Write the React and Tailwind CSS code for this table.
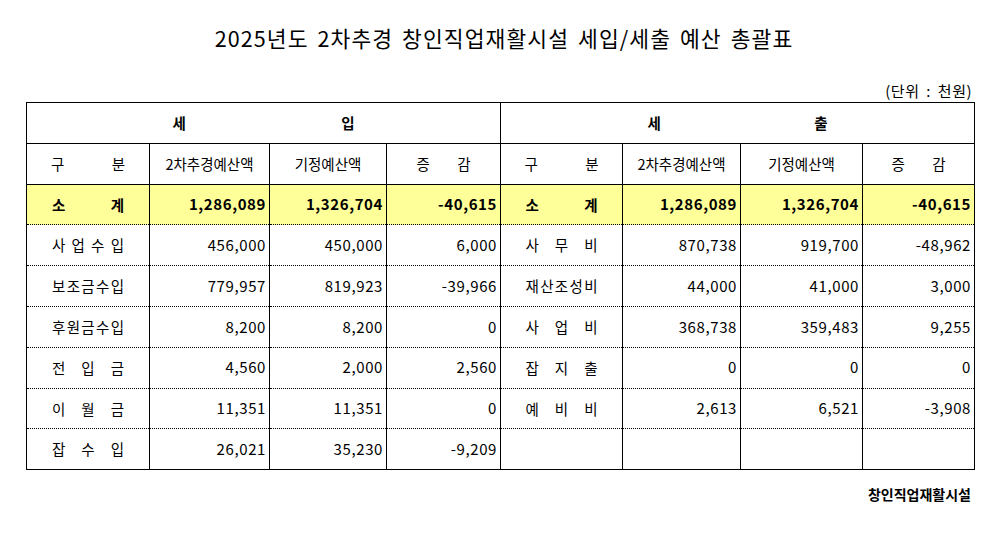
import React from 'react';

const income = [
  { label: ['사', '업', '수', '입'], a: '456,000', b: '450,000', c: '6,000' },
  { label: ['보', '조', '금', '수', '입'], a: '779,957', b: '819,923', c: '-39,966' },
  { label: ['후', '원', '금', '수', '입'], a: '8,200', b: '8,200', c: '0' },
  { label: ['전', '입', '금'], a: '4,560', b: '2,000', c: '2,560' },
  { label: ['이', '월', '금'], a: '11,351', b: '11,351', c: '0' },
  { label: ['잡', '수', '입'], a: '26,021', b: '35,230', c: '-9,209' },
];

const expense = [
  { label: ['사', '무', '비'], a: '870,738', b: '919,700', c: '-48,962' },
  { label: ['재', '산', '조', '성', '비'], a: '44,000', b: '41,000', c: '3,000' },
  { label: ['사', '업', '비'], a: '368,738', b: '359,483', c: '9,255' },
  { label: ['잡', '지', '출'], a: '0', b: '0', c: '0' },
  { label: ['예', '비', '비'], a: '2,613', b: '6,521', c: '-3,908' },
  null,
];

const Spread = ({ chars, width = 'w-[72px]' }) => (
  <span className={`mx-auto flex ${width} justify-between`}>
    {chars.map((ch, i) => (
      <span key={i}>{ch}</span>
    ))}
  </span>
);

const Num = ({ v, bold }) => (
  <td className={`border-x border-black pr-[3px] text-right text-[15px] tracking-[0.6px] ${bold ? 'font-bold' : ''}`}>
    {v}
  </td>
);

export default function App() {
  return (
    <div className="w-[998px] h-[533px] bg-white text-black" style={{ fontFamily: '"Noto Sans CJK KR", "Noto Sans", sans-serif' }}>
      <div className="pt-[22px] h-[80px] text-center text-[21.5px] leading-[32px] pl-[10px] tracking-[1.1px] [word-spacing:3px]">
        2025년도 2차추경 창인직업재활시설 세입/세출 예산 총괄표
      </div>
      <div className="h-[22px] pr-[26px] text-right text-[15px] leading-[22px] tracking-[0.5px] [word-spacing:3px]">(단위 : 천원)</div>

      <table className="ml-[26px] w-[948px] table-fixed border-collapse border border-black text-[14.5px]">
        <colgroup>
          <col className="w-[123px]" />
          <col className="w-[120px]" />
          <col className="w-[117px]" />
          <col className="w-[114px]" />
          <col className="w-[122px]" />
          <col className="w-[118px]" />
          <col className="w-[122px]" />
          <col className="w-[112px]" />
        </colgroup>
        <tbody>
          <tr className="h-[40.8px] font-bold">
            <td colSpan={4} className="border border-black">
              <Spread chars={['세', '입']} width="w-[182px]" />
            </td>
            <td colSpan={4} className="border border-black">
              <Spread chars={['세', '출']} width="w-[180px]" />
            </td>
          </tr>
          <tr className="h-[40.8px] text-center">
            <td className="border border-black"><Spread chars={['구', '분']} width="w-[74px]" /></td>
            <td className="border border-black">2차추경예산액</td>
            <td className="border border-black">기정예산액</td>
            <td className="border border-black"><Spread chars={['증', '감']} width="w-[54px]" /></td>
            <td className="border border-black"><Spread chars={['구', '분']} width="w-[74px]" /></td>
            <td className="border border-black">2차추경예산액</td>
            <td className="border border-black">기정예산액</td>
            <td className="border border-black"><Spread chars={['증', '감']} width="w-[54px]" /></td>
          </tr>
          <tr className="h-[40.8px] bg-[#ffff99] font-bold border-b border-dotted border-black">
            <td className="border-x border-black"><Spread chars={['소', '계']} /></td>
            <Num v="1,286,089" bold />
            <Num v="1,326,704" bold />
            <Num v="-40,615" bold />
            <td className="border-x border-black"><Spread chars={['소', '계']} /></td>
            <Num v="1,286,089" bold />
            <Num v="1,326,704" bold />
            <Num v="-40,615" bold />
          </tr>
          {income.map((row, i) => {
            const ex = expense[i];
            const last = i === income.length - 1;
            return (
              <tr key={i} className={`h-[40.8px] ${last ? '' : 'border-b border-dotted border-black'}`}>
                <td className="border-x border-black"><Spread chars={row.label} /></td>
                <Num v={row.a} />
                <Num v={row.b} />
                <Num v={row.c} />
                <td className="border-x border-black">{ex && <Spread chars={ex.label} />}</td>
                <Num v={ex ? ex.a : ''} />
                <Num v={ex ? ex.b : ''} />
                <Num v={ex ? ex.c : ''} />
              </tr>
            );
          })}
        </tbody>
      </table>

      <div className="mt-[14px] pr-[27px] text-right text-[14px] font-bold leading-[20px]">창인직업재활시설</div>
    </div>
  );
}
